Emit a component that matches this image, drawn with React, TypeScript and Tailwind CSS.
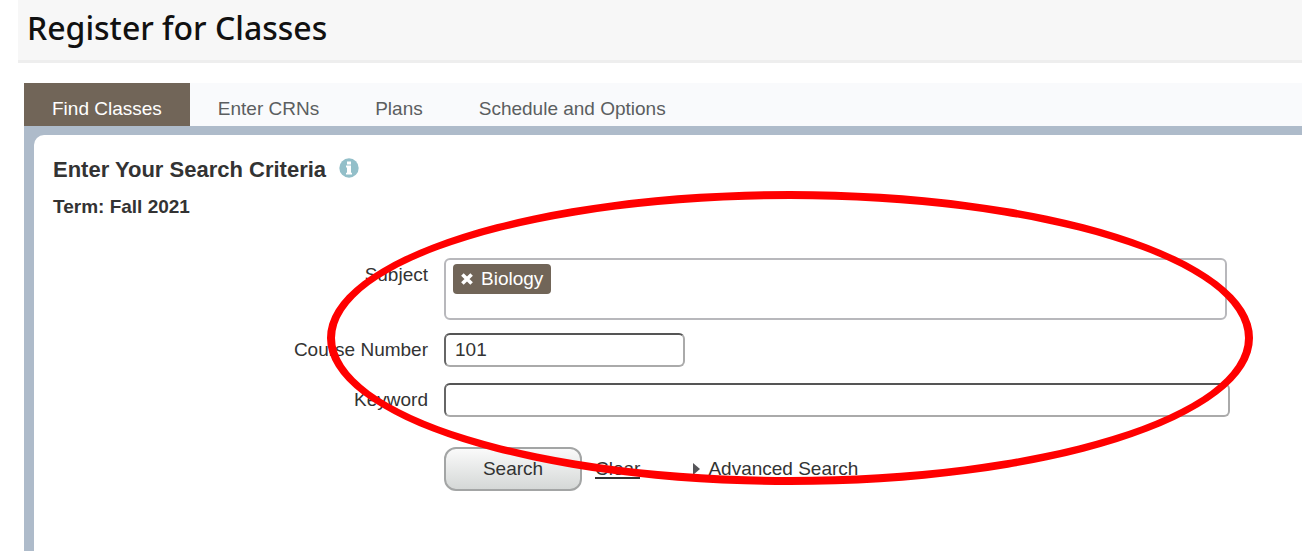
import { useState } from 'react';

const tabs = ['Find Classes', 'Enter CRNs', 'Plans', 'Schedule and Options'];

const InfoIcon = () => (
  <svg width="20" height="20" viewBox="0 0 20 20" aria-hidden="true">
    <circle cx="10" cy="10" r="9.7" fill="#93bfc9" />
    <path d="M8 3.4h4v3H8zM7 7.6h5v7.2h1v1.8H7v-1.8h1V9.4H7z" fill="#fff" />
  </svg>
);

const RemoveIcon = () => (
  <svg width="12" height="12" viewBox="0 0 12 12" aria-hidden="true">
    <path d="M1.4 1.4l9.2 9.2M10.6 1.4l-9.2 9.2" stroke="#fff" strokeWidth="3.6" />
  </svg>
);

const App = () => {
  const [activeTab, setActiveTab] = useState('Find Classes');
  const [subjects, setSubjects] = useState(['Biology']);
  const [courseNumber, setCourseNumber] = useState('101');
  const [keyword, setKeyword] = useState('');

  const handleClear = () => {
    setSubjects([]);
    setCourseNumber('');
    setKeyword('');
  };

  return (
    <div className="flex min-h-screen flex-col bg-white font-['Liberation_Sans',Arial,sans-serif] text-[19px] leading-6 text-[#333]">
      <header className="ml-[18px] border-b-3 border-[#eee] bg-[#f7f7f7] px-[9px] pt-1 pb-2">
        <h1 className="font-['Noto_Sans','Open_Sans',sans-serif] text-[32px] leading-12 font-medium text-[#111]">
          Register for Classes
        </h1>
      </header>

      <main className="mt-5 ml-6 flex flex-1 flex-col">
        {/* Tabs */}
        <nav className="flex bg-[#f9fafc]">
          {tabs.map((tab) => (
            <button
              key={tab}
              type="button"
              onClick={() => setActiveTab(tab)}
              className={
                tab === activeTab
                  ? 'bg-[#716558] px-7 pt-[14px] pb-[5px] text-white'
                  : 'px-7 pt-[14px] pb-[5px] text-[#5b5e60]'
              }
            >
              {tab}
            </button>
          ))}
        </nav>

        {/* Search panel */}
        <div className="flex flex-1 bg-[#aebbca] pt-[9px] pl-[10px]">
          <section className="relative flex-1 rounded-tl-[10px] bg-white pt-[23px]">
            <div className="flex items-start gap-[13px] pl-[19px]">
              <h2 className="text-[22px] leading-6 font-bold">Enter Your Search Criteria</h2>
              <button type="button" aria-label="Help">
                <InfoIcon />
              </button>
            </div>
            <p className="mt-[13px] pl-[19px] font-bold">Term: Fall 2021</p>

            <form
              onSubmit={(e) => e.preventDefault()}
              className="mt-[39px] grid grid-cols-[394px_1fr] gap-x-4 pr-[72px]"
            >
              <label htmlFor="subject" className="pt-[5px] text-right">
                Subject
              </label>
              <div className="mr-[3px] flex h-[62px] items-start gap-2 rounded-md border-2 border-[#b8b8bc] px-[7px] py-1">
                {subjects.map((subject) => (
                  <span key={subject} className="flex h-[30px] shrink-0 items-center gap-2 rounded bg-[#716558] px-2 text-white">
                    <button
                      type="button"
                      aria-label={`Remove ${subject}`}
                      onClick={() => setSubjects(subjects.filter((s) => s !== subject))}
                    >
                      <RemoveIcon />
                    </button>
                    {subject}
                  </span>
                ))}
                <input id="subject" type="text" className="h-[30px] min-w-0 flex-1 outline-none" />
              </div>

              <label htmlFor="course" className="mt-[13px] pt-[5px] text-right">
                Course Number
              </label>
              <input
                id="course"
                type="text"
                value={courseNumber}
                onChange={(e) => setCourseNumber(e.target.value)}
                className="mt-[13px] h-[34px] w-[241px] rounded-md border-2 border-t-[#555] border-r-[#aaa] border-b-[#aaa] border-l-[#666] px-[9px]"
              />

              <label htmlFor="keyword" className="mt-4 pt-[5px] text-right">
                Keyword
              </label>
              <input
                id="keyword"
                type="text"
                value={keyword}
                onChange={(e) => setKeyword(e.target.value)}
                className="mt-4 h-[34px] rounded-md border-2 border-t-[#555] border-r-[#aaa] border-b-[#aaa] border-l-[#666] px-[9px]"
              />

              <div className="col-start-2 mt-[30px] flex items-center">
                <button
                  type="submit"
                  className="h-11 w-[138px] rounded-xl border-2 border-[#a3a5a5] bg-linear-to-b from-[#fafafa] to-[#d5d8d7]"
                >
                  Search
                </button>
                <button type="button" onClick={handleClear} className="ml-[13px] border-b-2 border-[#333] pt-[2px] leading-4">
                  Clear
                </button>
                <svg className="ml-[53px]" width="7" height="12" viewBox="0 0 7 12" aria-hidden="true">
                  <path d="M0 0l7 6-7 6z" fill="#555559" />
                </svg>
                <a href="#advanced" className="ml-2 border-b-2 border-[#333] pt-[2px] leading-4">
                  Advanced Search
                </a>
              </div>
            </form>

            {/* Highlight ring around the form */}
            <div className="pointer-events-none absolute top-14 right-[49px] left-[293px] h-[294px] rounded-[50%] border-8 border-[#f00]" />
          </section>
        </div>
      </main>
    </div>
  );
};

export default App;
